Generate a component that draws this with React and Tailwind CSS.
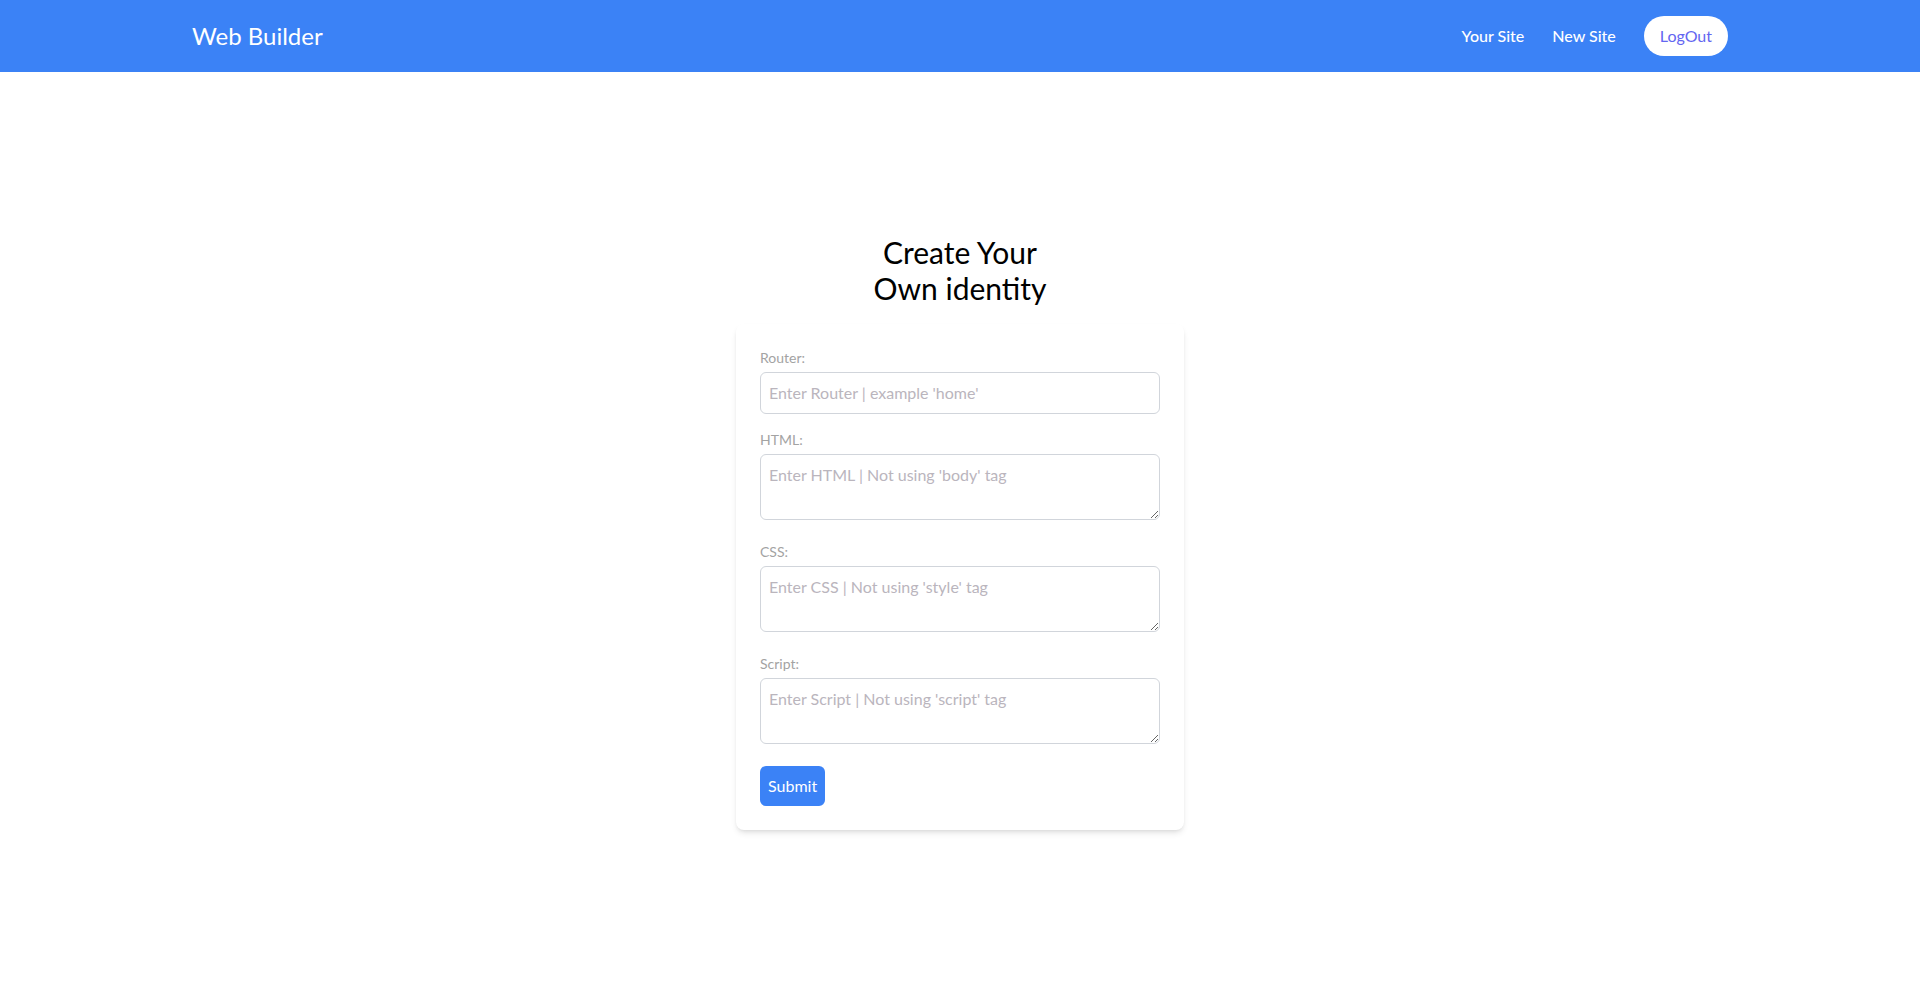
import React, { useState } from 'react';

const Navbar = () => {
  return (
    <nav className="bg-[#3b82f6] h-[72px]">
      <div className="container mx-auto h-full flex items-center justify-between">
        <a href="#" className="text-white text-2xl">Web Builder</a>
        <div className="flex items-center">
          <a href="#" className="text-white text-base font-medium mr-7">Your Site</a>
          <a href="#" className="text-white text-base font-medium mr-7">New Site</a>
          <button className="bg-white text-[#6366f1] rounded-full px-4 py-2 text-base">LogOut</button>
        </div>
      </div>
    </nav>
  );
};

const App = () => {
  const [form, setForm] = useState({ router: '', html: '', css: '', script: '' });

  const handleChange = (e) => {
    setForm({ ...form, [e.target.name]: e.target.value });
  };

  const handleSubmit = (e) => {
    e.preventDefault();
    console.log('Submitting site:', form);
  };

  const fieldClass =
    'block w-full border border-[#d1d5db] rounded-md px-2 py-2 text-base text-gray-700 placeholder:text-[#bab5bd] focus:outline-none';

  return (
    <div className="min-h-screen bg-white font-['Lato',sans-serif]">
      <Navbar />
      <div className="h-[calc(100vh-72px)] flex flex-col items-center justify-center">
        <h1 className="text-3xl text-center text-black mb-[18px]">
          Create Your
          <br />
          Own identity
        </h1>
        <form onSubmit={handleSubmit} className="bg-white rounded-lg shadow-md p-6 w-full max-w-md">
          <div className="mb-4">
            <label className="block text-sm text-[#a3a3a3] mb-1">Router:</label>
            <input
              type="text"
              name="router"
              value={form.router}
              onChange={handleChange}
              placeholder="Enter Router | example 'home'"
              className={fieldClass}
            />
          </div>
          <div className="mb-[22px]">
            <label className="block text-sm text-[#a3a3a3] mb-1">HTML:</label>
            <textarea
              name="html"
              rows="2"
              value={form.html}
              onChange={handleChange}
              placeholder="Enter HTML | Not using 'body' tag"
              className={fieldClass}
            />
          </div>
          <div className="mb-[22px]">
            <label className="block text-sm text-[#a3a3a3] mb-1">CSS:</label>
            <textarea
              name="css"
              rows="2"
              value={form.css}
              onChange={handleChange}
              placeholder="Enter CSS | Not using 'style' tag"
              className={fieldClass}
            />
          </div>
          <div className="mb-[22px]">
            <label className="block text-sm text-[#a3a3a3] mb-1">Script:</label>
            <textarea
              name="script"
              rows="2"
              value={form.script}
              onChange={handleChange}
              placeholder="Enter Script | Not using 'script' tag"
              className={fieldClass}
            />
          </div>
          <button type="submit" className="bg-[#3b82f6] text-white rounded-md px-2 py-2 text-base">
            Submit
          </button>
        </form>
      </div>
    </div>
  );
};

export default App;
